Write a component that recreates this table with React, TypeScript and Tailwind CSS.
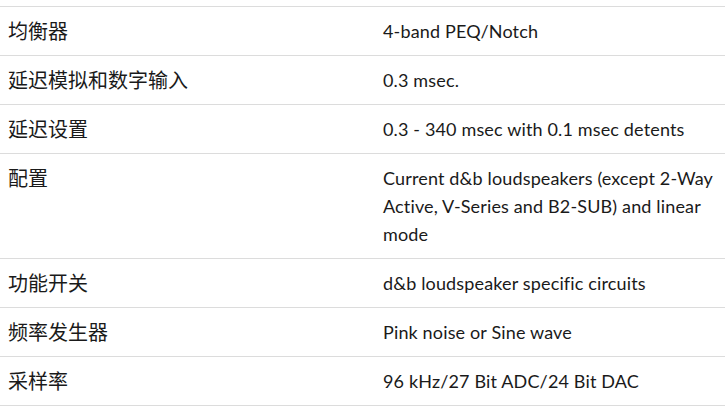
const rows: [string, string][] = [
  ["均衡器", "4-band PEQ/Notch"],
  ["延迟模拟和数字输入", "0.3 msec."],
  ["延迟设置", "0.3 - 340 msec with 0.1 msec detents"],
  ["配置", "Current d&b loudspeakers (except 2-Way Active, V-Series and B2-SUB) and linear mode"],
  ["功能开关", "d&b loudspeaker specific circuits"],
  ["频率发生器", "Pink noise or Sine wave"],
  ["采样率", "96 kHz/27 Bit ADC/24 Bit DAC"],
];

export default function App() {
  return (
    <div className="w-[725px] h-[412px] bg-white pt-[6px] text-[#1a1a1a]">
      <div className="border-t border-[#dcdcdc]">
        {rows.map(([k, v]) => (
          <div key={k} className="grid grid-cols-[375px_1fr] border-b border-[#dcdcdc]">
            <div className="pl-2 py-[10px] text-[20px] leading-[28px] font-['Noto_Sans_CJK_SC',sans-serif]">
              {k}
            </div>
            <div className="pl-2 py-[10px] text-[18px] leading-[28px] tracking-[0.15px] font-['Lato','Noto_Sans_CJK_SC',sans-serif]">
              {v}
            </div>
          </div>
        ))}
      </div>
    </div>
  );
}
